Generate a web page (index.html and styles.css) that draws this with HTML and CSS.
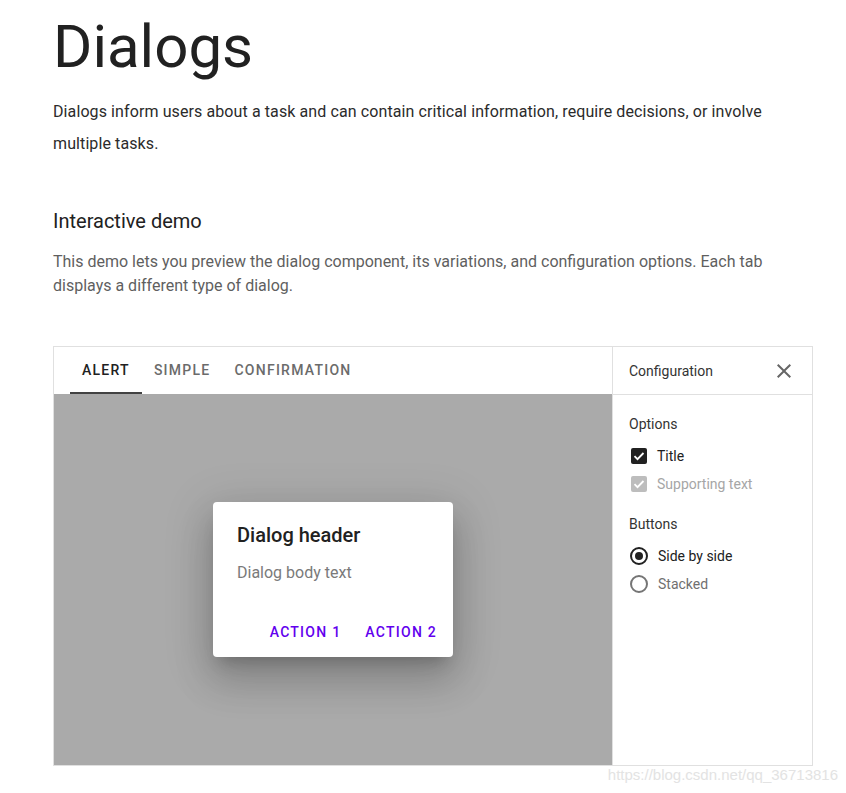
FILE: index.html
```html
<!DOCTYPE html>
<html>

<head>
  <title>Dialogs</title>
  <link rel="stylesheet" href="styles.css">
</head>

<body>

  <div class="page">
    <h1 class="title">Dialogs</h1>
    <p class="lead">Dialogs inform users about a task and can contain critical information, require decisions, or involve multiple tasks.</p>

    <h2 class="section-title">Interactive demo</h2>
    <p class="section-text">This demo lets you preview the dialog component, its variations, and configuration options. Each tab displays a different type of dialog.</p>

    <div class="demo">
      <div class="demo-main">
        <div class="tabs">
          <div class="tab active">ALERT</div>
          <div class="tab">SIMPLE</div>
          <div class="tab">CONFIRMATION</div>
        </div>
        <div class="stage">
          <div class="dialog">
            <div class="dialog-header">Dialog header</div>
            <div class="dialog-body">Dialog body text</div>
            <div class="dialog-actions">
              <span class="action">ACTION 1</span>
              <span class="action">ACTION 2</span>
            </div>
          </div>
        </div>
      </div>

      <div class="config">
        <div class="config-header">
          <span>Configuration</span>
          <svg class="close" width="24" height="24" viewBox="0 0 24 24">
            <path d="M19 6.41L17.59 5 12 10.59 6.41 5 5 6.41 10.59 12 5 17.59 6.41 19 12 13.41 17.59 19 19 17.59 13.41 12z" fill="#666"/>
          </svg>
        </div>
        <div class="config-body">
          <div class="group-label">Options</div>
          <div class="option">
            <span class="checkbox"><svg width="16" height="16" viewBox="0 0 16 16"><path d="M3.5 8.2l3 3 6-6.2" fill="none" stroke="#fff" stroke-width="1.8"/></svg></span>
            <span>Title</span>
          </div>
          <div class="option disabled">
            <span class="checkbox"><svg width="16" height="16" viewBox="0 0 16 16"><path d="M3.5 8.2l3 3 6-6.2" fill="none" stroke="#fff" stroke-width="1.8"/></svg></span>
            <span>Supporting text</span>
          </div>

          <div class="group-label buttons-label">Buttons</div>
          <div class="option">
            <span class="radio checked"></span>
            <span>Side by side</span>
          </div>
          <div class="option muted">
            <span class="radio"></span>
            <span>Stacked</span>
          </div>
        </div>
      </div>
    </div>
  </div>

  <div class="watermark">https://blog.csdn.net/qq_36713816</div>

</body>

</html>
```

FILE: styles.css
```css
body {
  margin: 0;
  font-family: Roboto, "Noto Sans", sans-serif;
  background: #fff;
}

.page {
  width: 760px;
  padding: 11px 0 0 53px;
}

.title {
  margin: 0;
  font-size: 60px;
  line-height: 72px;
  font-weight: 400;
  color: #212121;
}

.lead {
  margin: 13px 0 0;
  font-size: 16px;
  line-height: 32px;
  letter-spacing: 0.1px;
  color: #2b2b2b;
}

.section-title {
  margin: 47px 0 0;
  font-size: 20px;
  line-height: 28px;
  font-weight: 400;
  color: #212121;
}

.section-text {
  margin: 15px 0 0;
  font-size: 16px;
  line-height: 24px;
  color: #5f5f5f;
}

.demo {
  display: flex;
  margin-top: 48px;
  height: 418px;
  border: 1px solid #e0e0e0;
}

.demo-main {
  flex: 1;
  display: flex;
  flex-direction: column;
}

.tabs {
  display: flex;
  height: 47px;
  padding-left: 16px;
}

.tab {
  display: flex;
  align-items: center;
  padding: 0 12px;
  border-bottom: 2px solid transparent;
  border-top: 1px solid transparent;
  font-size: 14px;
  font-weight: 500;
  letter-spacing: 1.25px;
  color: #6b6b6b;
}

.tab.active {
  color: #212121;
  border-bottom-color: #424242;
}

.stage {
  flex: 1;
  display: flex;
  align-items: center;
  justify-content: center;
  background: #aaaaaa;
}

.dialog {
  width: 240px;
  box-sizing: border-box;
  padding: 19px 0 0;
  background: #fff;
  border-radius: 4px;
  box-shadow: 0 11px 15px -7px rgba(0, 0, 0, 0.2),
    0 24px 38px 3px rgba(0, 0, 0, 0.14),
    0 9px 46px 8px rgba(0, 0, 0, 0.12);
}

.dialog-header {
  padding: 0 24px;
  font-size: 20px;
  line-height: 28px;
  font-weight: 500;
  color: #212121;
}

.dialog-body {
  margin-top: 12px;
  padding: 0 24px;
  font-size: 16px;
  line-height: 24px;
  color: #7a7a7a;
}

.dialog-actions {
  display: flex;
  justify-content: flex-end;
  gap: 8px;
  margin-top: 21px;
  padding: 8px 8px 7px;
}

.action {
  display: flex;
  align-items: center;
  height: 36px;
  padding: 0 8px;
  font-size: 14px;
  font-weight: 500;
  letter-spacing: 1.25px;
  color: #6200ee;
}

.config {
  width: 199px;
  border-left: 1px solid #e0e0e0;
}

.config-header {
  display: flex;
  align-items: center;
  justify-content: space-between;
  height: 47px;
  padding: 0 16px;
  border-bottom: 1px solid #e0e0e0;
  font-size: 14px;
  color: #333;
}

.config-body {
  padding: 19px 16px 0;
}

.group-label {
  font-size: 14px;
  line-height: 20px;
  color: #333;
  margin-bottom: 8px;
}

.buttons-label {
  margin-top: 16px;
}

.option {
  display: flex;
  align-items: center;
  height: 28px;
  font-size: 14px;
  color: #212121;
}

.option.disabled {
  color: #a6a6a6;
}

.option.muted {
  color: #707070;
}

.checkbox {
  width: 16px;
  height: 16px;
  margin: 0 10px 0 2px;
  border-radius: 2px;
  background: #212121;
  display: flex;
}

.disabled .checkbox {
  background: #bdbdbd;
}

.radio {
  width: 14px;
  height: 14px;
  margin: 0 10px 0 1px;
  border: 2px solid #757575;
  border-radius: 50%;
  display: flex;
  align-items: center;
  justify-content: center;
}

.radio.checked {
  border-color: #212121;
}

.radio.checked::after {
  content: "";
  width: 8px;
  height: 8px;
  border-radius: 50%;
  background: #212121;
}

.watermark {
  position: absolute;
  right: 8px;
  top: 765px;
  font-family: "Liberation Sans", Arial, sans-serif;
  font-size: 15px;
  line-height: 20px;
  color: #e3e3e3;
}
```
